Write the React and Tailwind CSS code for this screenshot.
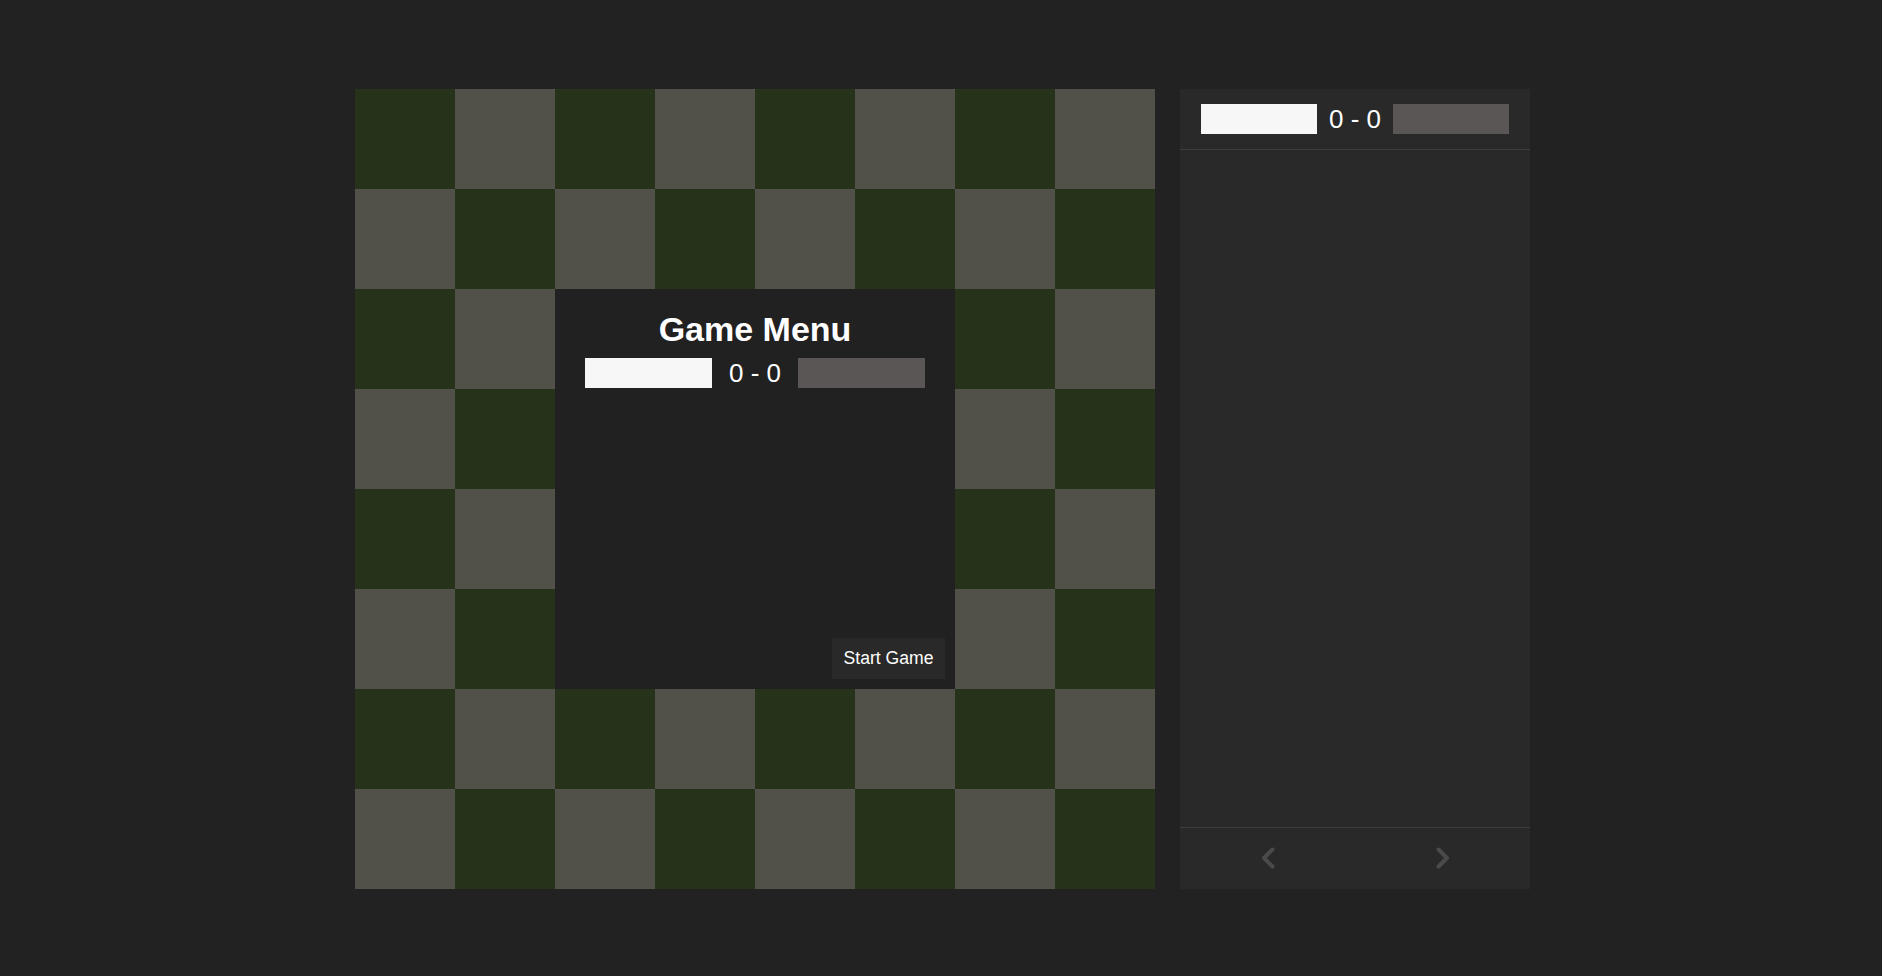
import React from "react";

const DARK = "bg-[#263219]";
const LIGHT = "bg-[#51514a]";

function Chevron({ dir }) {
  const pts = dir === "left" ? "11.5,2.5 3,11 11.5,19.5" : "2.5,2.5 11,11 2.5,19.5";
  return (
    <svg width="14" height="22" viewBox="0 0 14 22" fill="none">
      <polyline points={pts} stroke="#4a4a4a" strokeWidth="4" strokeLinecap="round" strokeLinejoin="round" />
    </svg>
  );
}

export default function App() {
  const squares = [];
  for (let r = 0; r < 8; r++) {
    for (let c = 0; c < 8; c++) {
      squares.push(
        <div key={`${r}-${c}`} className={(r + c) % 2 === 0 ? DARK : LIGHT} />
      );
    }
  }
  return (
    <div
      className="w-full h-screen bg-[#222222] flex justify-center items-center"
      style={{ fontFamily: '"Liberation Sans", Arial, sans-serif' }}
    >
      <div className="flex gap-[25px] ml-[3px] mt-[1px]">
        <div className="relative w-[800px] h-[800px]">
          <div className="grid grid-cols-8 grid-rows-8 w-full h-full">{squares}</div>
          <div className="absolute left-[200px] top-[200px] w-[400px] h-[400px] bg-[#212121] flex flex-col items-center">
            <h1 className="mt-[21px] text-[34px] leading-[38px] font-bold text-white">Game Menu</h1>
            <div className="mt-[10px] flex items-center gap-[17px]">
              <div className="w-[127px] h-[30px] bg-[#f7f7f7]" />
              <span className="text-[26px] leading-[30px] text-white">0 - 0</span>
              <div className="w-[127px] h-[30px] bg-[#5a5655]" />
            </div>
            <div className="flex-1" />
            <div className="self-end mr-[10px] mb-[10px] w-[113px] h-[41px] bg-[#292929] flex items-center justify-center text-[17.6px] text-white">
              Start Game
            </div>
          </div>
        </div>
        <div className="w-[350px] h-[800px] bg-[#292929] flex flex-col">
          <div className="h-[61px] border-b border-[#3d3d3d] flex items-center justify-center gap-[12px]">
            <div className="w-[116px] h-[30px] bg-[#f7f7f7]" />
            <span className="text-[26px] leading-[30px] text-white">0 - 0</span>
            <div className="w-[116px] h-[30px] bg-[#5a5655]" />
          </div>
          <div className="flex-1" />
          <div className="h-[62px] border-t border-[#3d3d3d] flex">
            <div className="flex-1 flex items-center justify-center">
              <Chevron dir="left" />
            </div>
            <div className="flex-1 flex items-center justify-center">
              <Chevron dir="right" />
            </div>
          </div>
        </div>
      </div>
    </div>
  );
}
